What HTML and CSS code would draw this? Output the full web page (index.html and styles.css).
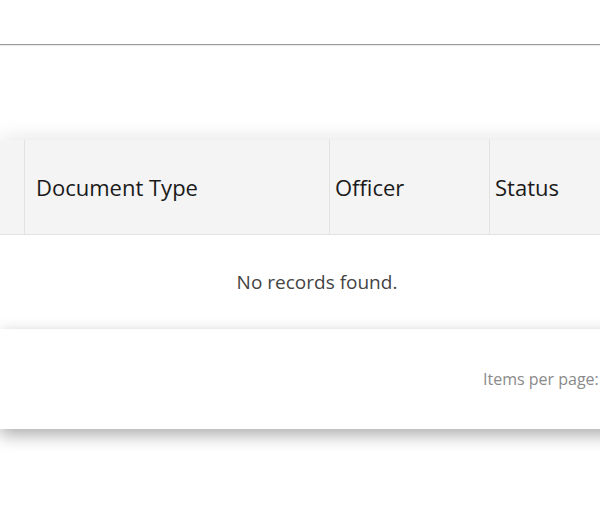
FILE: index.html
```html
<!DOCTYPE html>
<html>
<head>
<meta charset="utf-8">
<link rel="stylesheet" href="styles.css">
</head>
<body>
<div class="page">
  <div class="topbar"></div>
  <div class="content">
    <div class="inner">
      <div class="table-card">
        <div class="thead">
          <div class="th th-sel"></div>
          <div class="th th-doc">Document Type</div>
          <div class="th th-off">Officer</div>
          <div class="th th-status">Status</div>
        </div>
        <div class="empty-row">No records found.</div>
      </div>
      <div class="paginator">
        <span class="ipp">Items per page:</span>
      </div>
    </div>
  </div>
</div>
</body>
</html>
```
FILE: styles.css
```css
html, body {
  margin: 0;
  padding: 0;
  background: #fff;
  overflow: hidden;
  width: 600px;
  height: 508px;
}
.page {
  font-family: "Open Sans", "Noto Sans", sans-serif;
  color: #222;
}
.topbar {
  height: 44px;
  border-bottom: 1px solid #9a9a9a;
  box-shadow: 0 1px 1px rgba(0,0,0,0.08);
}
.content {
  width: 600px;
  overflow: hidden;
  padding-top: 95px;
  padding-bottom: 40px;
}
.inner {
  width: 640px;
}
.table-card {
  background: #fff;
  box-shadow: 0 0 22px rgba(0,0,0,0.12);
  position: relative;
}
.thead {
  display: flex;
  height: 94px;
  background: #f4f4f4;
  border-bottom: 1px solid #e2e2e2;
}
.th {
  display: flex;
  align-items: center;
  font-size: 22px;
  color: #1a1a1a;
  border-right: 1px solid #e2e2e2;
  box-sizing: border-box;
}
.th-sel { width: 25px; }
.th-doc { width: 305px; padding-left: 11px; }
.th-off { width: 160px; padding-left: 5px; }
.th-status { flex: 1; padding-left: 5px; border-right: none; }
.empty-row {
  height: 94px;
  display: flex;
  align-items: center;
  justify-content: center;
  width: 634px;
  font-size: 19px;
  color: #444;
}
.paginator {
  position: relative;
  height: 100px;
  background: #fff;
  box-shadow: 0 6px 16px rgba(0,0,0,0.33);
  display: flex;
  align-items: center;
  padding-left: 483px;
}
.ipp {
  font-size: 16px;
  color: #8a8a8a;
  white-space: nowrap;
}
```
